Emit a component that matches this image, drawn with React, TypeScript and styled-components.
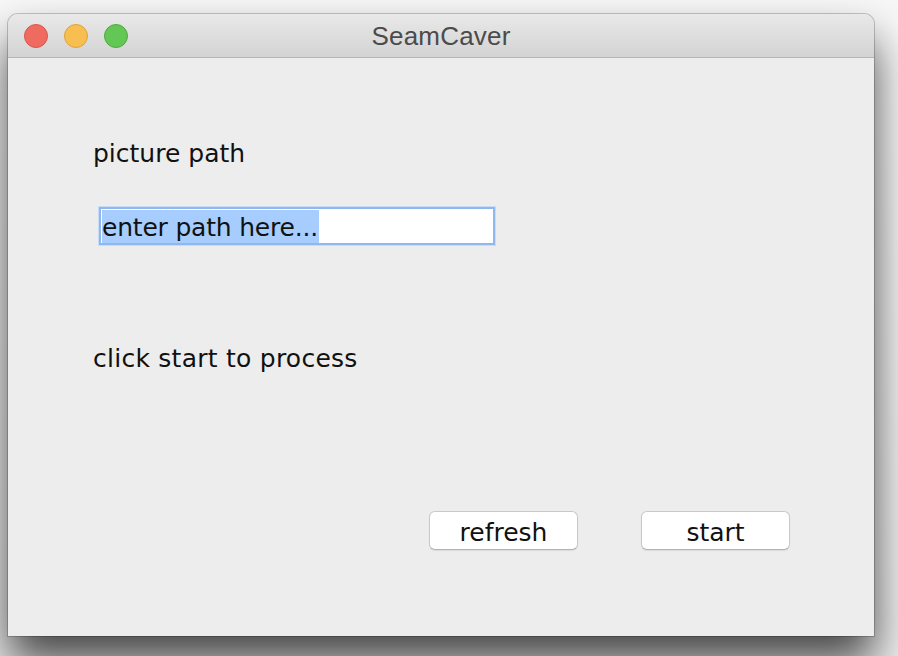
import React from "react";
import styled, { createGlobalStyle } from "styled-components";

const Global = createGlobalStyle`
  html, body { margin: 0; padding: 0; background: #f6f6f6; }
  body { font-family: "DejaVu Sans", Verdana, sans-serif; }
`;

const Page = styled.div`
  width: 898px;
  height: 656px;
  overflow: hidden;
  padding: 14px 0 0 8px;
  box-sizing: border-box;
  background: linear-gradient(#f7f7f7, #eeeeee);
`;

const Window = styled.div`
  width: 866px;
  height: 622px;
  display: flex;
  flex-direction: column;
  border-radius: 10px 10px 0 0;
  background: #ededed;
  box-shadow: 0 0 0 1px rgba(0, 0, 0, 0.2), 0 26px 44px rgba(0, 0, 0, 0.7);
  overflow: hidden;
`;

const TitleBar = styled.div`
  position: relative;
  height: 43px;
  flex: none;
  display: flex;
  align-items: center;
  justify-content: center;
  background: linear-gradient(#e9e9e9, #d3d3d3);
  border-bottom: 1px solid #b5b5b5;
`;

const Lights = styled.div`
  position: absolute;
  left: 16px;
  top: 10px;
  display: flex;
  gap: 16px;
`;

const Light = styled.span<{ $fill: string; $edge: string }>`
  width: 22px;
  height: 22px;
  border-radius: 50%;
  background: ${(p) => p.$fill};
  border: 1px solid ${(p) => p.$edge};
`;

const Title = styled.div`
  font-family: "Liberation Sans", Arial, sans-serif;
  font-size: 26px;
  color: #4b4b4b;
  letter-spacing: 0.2px;
  margin-top: 2px;
`;

const Content = styled.div`
  flex: 1;
  display: flex;
  flex-direction: column;
  padding: 81px 84px 0 85px;
`;

const Label = styled.div<{ $gap?: number; $spacing?: number }>`
  font-size: 25px;
  line-height: 30px;
  color: #111;
  margin-top: ${(p) => p.$gap ?? 0}px;
  letter-spacing: ${(p) => p.$spacing ?? 0}px;
`;

const Field = styled.div`
  margin: 38px 0 0 6px;
  width: 391px;
  height: 34px;
  background: #fff;
  border: 2px solid #8fb8f0;
  box-shadow: 0 0 0 1px #c9dcf7;
  display: flex;
  align-items: center;
  padding-left: 1px;
  font-size: 25px;
  color: #111;
`;

const Selection = styled.span`
  background: #a6cdfd;
  line-height: 31px;
  padding: 2px 1px 0 0;
  letter-spacing: -0.2px;
`;

const Buttons = styled.div`
  margin-top: 137px;
  display: flex;
  justify-content: flex-end;
  gap: 63px;
`;

const Button = styled.button`
  width: 149px;
  height: 39px;
  box-sizing: border-box;
  background: #fff;
  border: 1px solid #c9c9c9;
  border-bottom-color: #b3b3b3;
  border-radius: 6px;
  box-shadow: 0 1px 1px rgba(0, 0, 0, 0.08);
  font-family: "DejaVu Sans", Verdana, sans-serif;
  font-size: 25px;
  color: #111;
  padding: 3px 0 0;
  line-height: 33px;
`;

export default function App() {
  return (
    <>
      <Global />
      <Page>
        <Window>
          <TitleBar>
            <Lights>
              <Light $fill="#ef6b60" $edge="#d8564b" />
              <Light $fill="#f7be50" $edge="#dfa23c" />
              <Light $fill="#63c756" $edge="#4fa93f" />
            </Lights>
            <Title>SeamCaver</Title>
          </TitleBar>
          <Content>
            <Label>picture path</Label>
            <Field>
              <Selection>enter path here...</Selection>
            </Field>
            <Label $gap={99} $spacing={0.25}>
              click start to process
            </Label>
            <Buttons>
              <Button>refresh</Button>
              <Button>start</Button>
            </Buttons>
          </Content>
        </Window>
      </Page>
    </>
  );
}
